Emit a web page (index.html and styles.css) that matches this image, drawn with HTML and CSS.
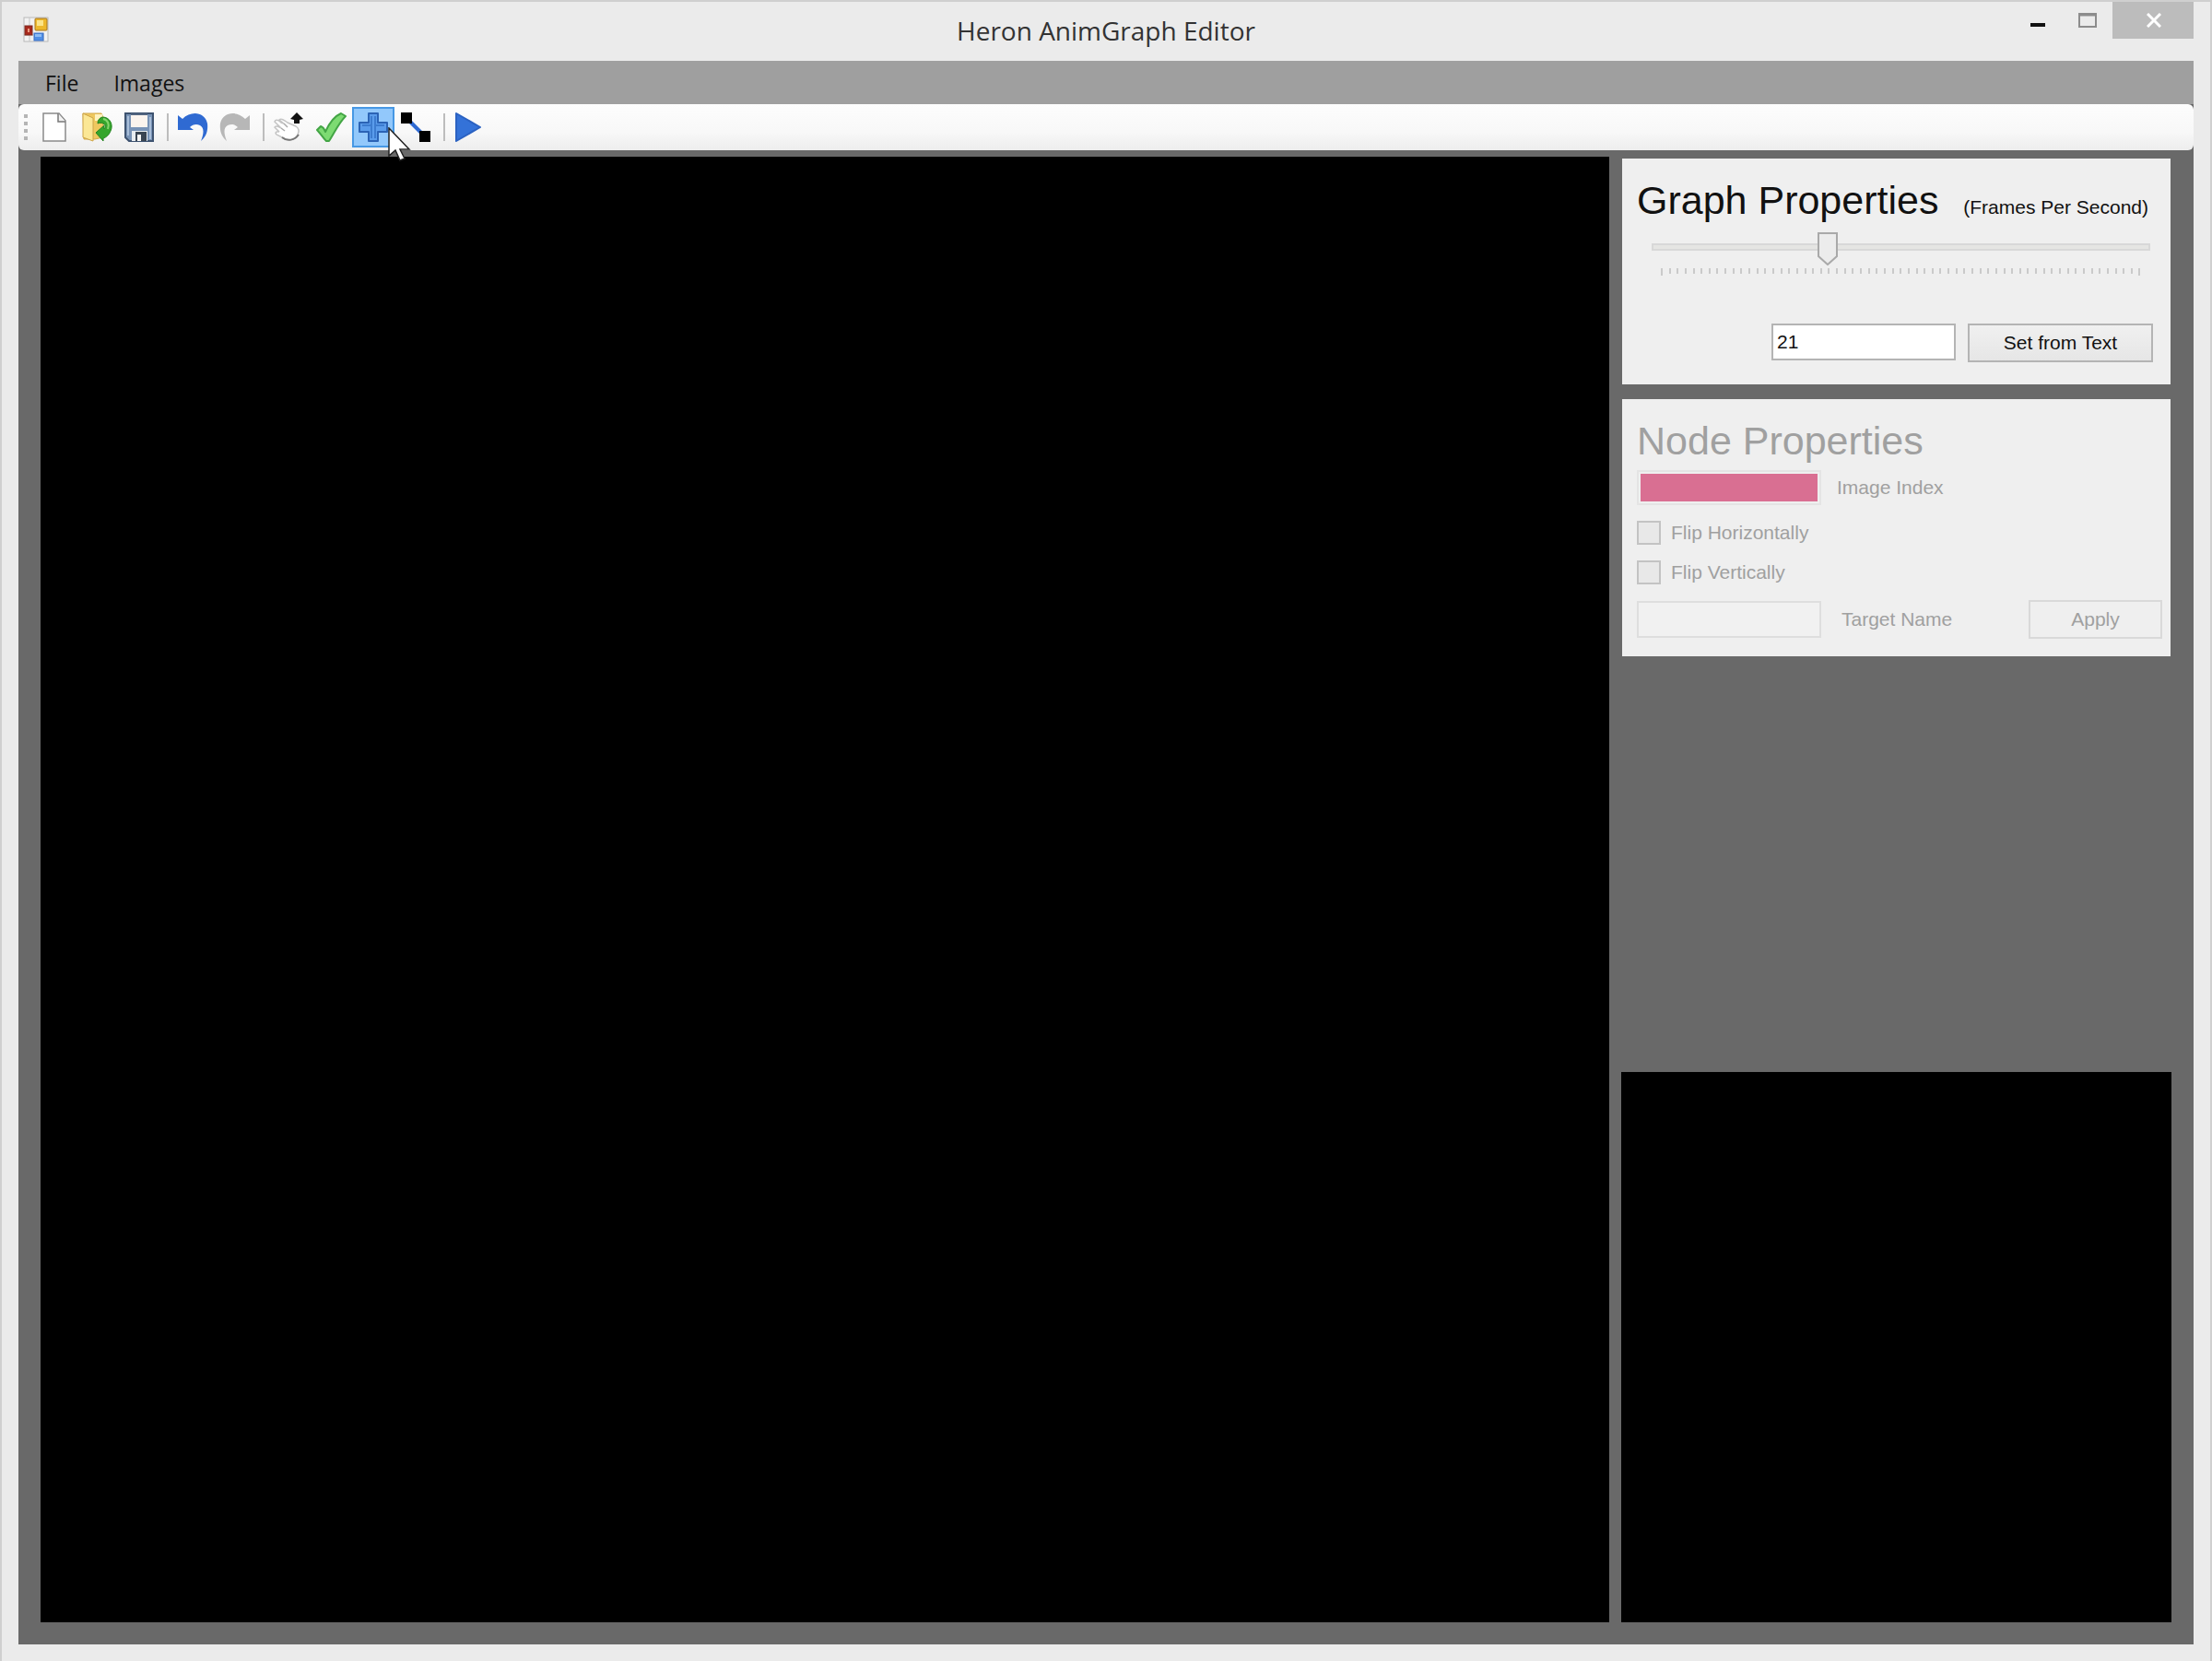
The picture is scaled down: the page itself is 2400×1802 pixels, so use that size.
FILE: index.html
```
<!DOCTYPE html>
<html lang="en">
<head>
<meta charset="UTF-8" />
<meta name="viewport" content="width=device-width, initial-scale=1" />
<title>Heron AnimGraph Editor</title>
<link rel="stylesheet" href="styles.css">
</head>
<body>

<div class="window">
  <header class="titlebar">
    <svg class="app-icon" width="28" height="28" viewBox="0 0 28 28">
      <rect x="1" y="1" width="26" height="26" fill="#f2f2f2" stroke="#b9b9b9" />
      <path d="M7 1v26M1 20h10M22 18v9" stroke="#c4c4c4" />
      <rect x="2" y="10" width="8" height="10" fill="#a8281c" stroke="#7c2a20" />
      <rect x="5" y="13" width="2" height="4" fill="#e99a80" />
      <rect x="13" y="2" width="13" height="13" rx="1" fill="#edb82c" stroke="#a8771c" />
      <rect x="15" y="4" width="7" height="6" fill="#fbe489" />
      <rect x="12" y="18" width="10" height="8" fill="#4f8ee6" stroke="#3a6fc4" />
      <rect x="13" y="19" width="7" height="3" fill="#8dbcf5" />
    </svg>
    <h1>Heron AnimGraph Editor</h1>
    <div class="window-buttons">
      <button type="button" class="minimize" aria-label="Minimize">
        <svg width="16" height="16" viewBox="0 0 16 16"><rect x="0" y="11" width="16" height="4" fill="#111" /></svg>
      </button>
      <button type="button" class="maximize" aria-label="Maximize">
        <svg width="20" height="16" viewBox="0 0 20 16">
          <rect x="1" y="1" width="18" height="14" fill="none" stroke="#8c8c8c" stroke-width="2" />
          <path d="M0 2h20" stroke="#8c8c8c" stroke-width="3" />
        </svg>
      </button>
      <button type="button" class="close" aria-label="Close">
        <svg width="16" height="16" viewBox="0 0 16 16"><path d="M1 1l14 14M15 1L1 15" stroke="#fff" stroke-width="3" /></svg>
      </button>
    </div>
  </header>

  <main class="client">
    <nav class="menubar">
      <button type="button">File</button>
      <button type="button">Images</button>
    </nav>

    <div class="toolbar-tray">
      <div class="toolbar">
        <span class="grip"></span>
        <button type="button" aria-label="New">
          <svg width="34" height="34" viewBox="0 0 34 34">
            <path d="M5 2h17l7 8v22H5z" fill="#fff" stroke="#8a8a8a" stroke-width="1.5" />
            <path d="M21 2v9h8" fill="#f1f1f1" stroke="#777" stroke-width="1.5" />
          </svg>
        </button>
        <button type="button" aria-label="Open">
          <svg width="34" height="34" viewBox="0 0 34 34">
            <path d="M2 2h20l2 4v22l-9 2H3z" fill="#efc85f" stroke="#d3aa4c" />
            <path d="M15 3h8l1 7h-9z" fill="#fff2bf" />
            <path d="M2 2l11 5v25L2 28z" fill="#fbe795" stroke="#cda448" />
            <path d="M23 6c9 0 12 9 9 15-2 5-5 7-8 8v3l-8-9 9-8v4c2-2 2-4-1-6-2-1-4-1-6 0 0-4 2-6 5-7z" fill="#35a52c" stroke="#23831f" />
            <path d="M24 8c5 1 7 6 5 11" fill="none" stroke="#86d66c" stroke-width="2" />
          </svg>
        </button>
        <button type="button" aria-label="Save">
          <svg width="34" height="34" viewBox="0 0 34 34">
            <path d="M2 2h30v30H6l-4-4z" fill="#7893b6" stroke="#3e5370" stroke-width="2" />
            <path d="M5 5v21M29 6v24" stroke="#a9bed8" stroke-width="2" />
            <rect x="8" y="2" width="18" height="15" fill="#fbf4ee" />
            <path d="M8 3h18" stroke="#52657f" stroke-width="2" />
            <rect x="9" y="21" width="17" height="11" fill="#e9edf1" />
            <rect x="13" y="22" width="12" height="10" fill="#3a4552" />
            <rect x="15" y="25" width="4" height="7" fill="#f7f7f7" />
          </svg>
        </button>
        <span class="separator"></span>
        <button type="button" aria-label="Undo">
          <svg width="34" height="34" viewBox="0 0 34 34">
            <path d="M1 4l5 4C15-1 30 0 33 13c1 9-2 15-7 19 3-8 4-14-1-17-4-2-8-1-11 2l4 3H1z" fill="#2f6ad2" />
          </svg>
        </button>
        <button type="button" aria-label="Redo">
          <svg width="34" height="34" viewBox="0 0 34 34">
            <path d="M33 4l-5 4C19-1 4 0 1 13c-1 9 2 15 7 19-3-8-4-14 1-17 4-2 8-1 11 2l-4 3h17z" fill="#b7b7b7" />
          </svg>
        </button>
        <span class="separator"></span>
        <button type="button" aria-label="Move">
          <svg width="34" height="34" viewBox="0 0 34 34">
            <path d="M9 18L2 11c1-3 4-2 7 1l3 1-5-4c2-2 5 0 9 3l9 4c3 2 4 5 2 9-2 5-8 7-13 5L4 25c-2-2 0-4 3-3l-5-5c1-2 4-1 7 1z" fill="#fff" stroke="#c4c4c4" stroke-width="1.5" />
            <path d="M10 28c6 5 14 3 18-3" fill="none" stroke="#777" stroke-width="2" />
            <path d="M9 18l4 3M12 13l4 4" fill="none" stroke="#aaa" stroke-width="1.5" />
            <path d="M26 1l7 7-4 1v4h-6V9l-4-1z" fill="#111" />
          </svg>
        </button>
        <button type="button" aria-label="Select">
          <svg width="34" height="34" viewBox="0 0 34 34">
            <path d="M2 20l4-4c3 1 4 3 5 6C15 13 21 5 28 2l5 3c-8 8-12 18-18 27h-3C8 28 5 23 2 20z" fill="#7ddb72" stroke="#43a545" stroke-width="2" stroke-linejoin="round" />
          </svg>
        </button>
        <button type="button" class="active" aria-label="Add node" aria-pressed="true">
          <svg width="34" height="34" viewBox="0 0 34 34">
            <path d="M12 2h10v10h10v10H22v10H12V22H2V12h10z" fill="#5a9ceb" stroke="#2b63b5" stroke-width="2" stroke-linejoin="round" />
            <path d="M15 5v24M19 5v24M5 15h10M19 15h10" stroke="#3c7ccf" stroke-width="2" />
          </svg>
          <svg class="cursor" width="26" height="38" viewBox="0 0 26 38">
            <path d="M1 1v30l7-6 5 11 5-2-5-10h10z" fill="#fff" stroke="#222" stroke-width="1.5" />
          </svg>
        </button>
        <button type="button" aria-label="Add link">
          <svg width="34" height="34" viewBox="0 0 34 34">
            <path d="M7 7l20 20" stroke="#2f6ad2" stroke-width="4" />
            <rect x="1" y="1" width="12" height="12" fill="#000" />
            <rect x="21" y="21" width="12" height="12" fill="#000" />
          </svg>
        </button>
        <span class="separator"></span>
        <button type="button" aria-label="Play">
          <svg width="34" height="34" viewBox="0 0 34 34">
            <path d="M3 2l26 15L3 32z" fill="#3472d8" stroke="#2b62c2" stroke-width="2" stroke-linejoin="round" />
          </svg>
        </button>
      </div>
    </div>

    <div class="workspace">
      <section class="graph-view" aria-label="Graph"></section>

      <aside class="sidebar">
        <form class="panel graph-panel" id="formGraph">
          <div class="panel-header">
            <h2>Graph Properties</h2>
            <label for="fps">(Frames Per Second)</label>
          </div>
          <input type="range" id="fps" min="0" max="60" value="21" />
          <div class="ticks" id="ticks"></div>
          <div class="fps-row">
            <input type="text" class="textbox" id="fpsText" value="21" aria-label="Frames per second" />
            <button type="submit" class="set-button">Set from Text</button>
          </div>
        </form>

        <fieldset class="panel node-panel" disabled>
          <h2>Node Properties</h2>
          <div class="field">
            <input type="text" class="textbox image-index" id="imageIndex" />
            <label for="imageIndex">Image Index</label>
          </div>
          <label class="check"><input type="checkbox" /> Flip Horizontally</label>
          <label class="check"><input type="checkbox" /> Flip Vertically</label>
          <div class="field target">
            <input type="text" class="textbox" id="targetName" />
            <label for="targetName">Target Name</label>
            <button type="button" class="apply-button">Apply</button>
          </div>
        </fieldset>

        <section class="preview" aria-label="Preview"></section>
      </aside>
    </div>
  </main>
</div>

<script>
  const fps = document.getElementById('fps');
  const fpsText = document.getElementById('fpsText');
  const ticks = document.getElementById('ticks');

  // one tick per slider step
  for (let i = 0; i <= Number(fps.max); i++) {
    ticks.appendChild(document.createElement('span'));
  }

  fps.addEventListener('input', function() {
    fpsText.value = fps.value;
  });

  document.getElementById('formGraph').addEventListener('submit', function(event) {
    event.preventDefault();
    fps.value = fpsText.value;
  });
</script>

</body>
</html>
```

FILE: styles.css
```
* {
  box-sizing: border-box;
}
body {
  margin: 0;
  font-family: "Liberation Sans", Arial, sans-serif;
  font-size: 21px;
  line-height: 24px;
  color: #111;
}
button, input {
  font: inherit;
  color: inherit;
}
button {
  padding: 0;
  border: none;
  background: none;
}
svg {
  display: block;
}
h1, h2 {
  margin: 0;
  font-weight: normal;
}

/* window frame */
.window {
  display: flex;
  flex-direction: column;
  min-height: 100vh;
  padding: 0 18px 18px;
  background: #ebebeb;
  border: 2px solid #cfcfcf;
  border-bottom: none;
}
.titlebar {
  display: grid;
  grid-template-columns: 1fr auto 1fr;
  align-items: start;
  height: 64px;
}
.app-icon {
  margin: 16px 5px;
}
h1 {
  font-family: "Open Sans", "Noto Sans", sans-serif;
  font-size: 28px;
  line-height: 62px;
  color: #333;
}
.window-buttons {
  display: flex;
  justify-content: flex-end;
}
.window-buttons button {
  display: flex;
  align-items: center;
  justify-content: center;
  width: 54px;
  height: 40px;
}
.window-buttons .close {
  width: 88px;
  padding-left: 2px;
  background: #bcbcbc;
}

/* menu and tools */
.client {
  flex: 1;
  display: flex;
  flex-direction: column;
  background: #696969;
}
.menubar {
  display: flex;
  gap: 38px;
  height: 47px;
  padding: 0 29px;
  background: #9f9f9f;
  font-family: "Open Sans", "Noto Sans", sans-serif;
  font-size: 23px;
}
.toolbar {
  display: flex;
  align-items: center;
  height: 50px;
  padding: 0 4px;
  border-radius: 6px;
  background: linear-gradient(#fdfdfd, #f8f8f8 60%, #ededed);
}
.toolbar button {
  position: relative;
  display: flex;
  align-items: center;
  justify-content: center;
  width: 46px;
  height: 44px;
}
.toolbar .active {
  background: #92c8fb;
  border: 2px solid #4798e4;
}
.cursor {
  position: absolute;
  left: 37px;
  top: 20px;
  z-index: 1;
}
.grip {
  width: 4px;
  height: 28px;
  margin: 0 6px 0 2px;
  background: repeating-linear-gradient(#b5b5b5 0 4px, transparent 4px 8px);
}
.separator {
  width: 2px;
  height: 30px;
  margin: 0 3px 0 7px;
  background: #bdbdbd;
}

/* work area */
.workspace {
  flex: 1;
  display: grid;
  grid-template-columns: 1fr 597px;
  gap: 13px;
  padding: 7px 24px 24px;
}
.graph-view, .preview {
  background: #000;
}
.sidebar {
  display: flex;
  flex-direction: column;
  gap: 16px;
  padding-top: 2px;
}
.preview {
  margin-top: auto;
  aspect-ratio: 1;
}
.panel {
  margin: 0 1px;
  padding: 21px 9px 19px 16px;
  border: none;
  background: #efefef;
}
h2 {
  font-size: 43px;
  line-height: 48px;
}
.panel-header {
  display: flex;
  justify-content: space-between;
  align-items: baseline;
  padding-right: 15px;
}
.textbox {
  width: 200px;
  height: 40px;
  padding: 0 4px;
  border: 2px solid #b4b4b4;
  background: #fff;
}

/* frame rate slider */
.graph-panel {
  padding-bottom: 24px;
}
#fps {
  -webkit-appearance: none;
  appearance: none;
  display: block;
  width: calc(100% - 29px);
  height: 36px;
  margin: 9px 13px 0 16px;
  background: none;
}
#fps::-webkit-slider-runnable-track {
  height: 8px;
  border: 2px solid #d8d8d8;
  background: #e5e5e3;
}
#fps::-webkit-slider-thumb {
  -webkit-appearance: none;
  width: 22px;
  height: 36px;
  margin: -14px -2px 0;
  background: url("data:image/svg+xml,%3Csvg xmlns='http://www.w3.org/2000/svg' width='22' height='36'%3E%3Cpath d='M1 1h20v25L11 35 1 26z' fill='%23ececec' stroke='%23a9a9a9' stroke-width='2'/%3E%3C/svg%3E") no-repeat;
}
.ticks {
  display: flex;
  justify-content: space-between;
  height: 8px;
  margin: 5px 23px 0 26px;
}
.ticks span {
  width: 2px;
  height: 6px;
  background: #cacaca;
}
.ticks span:first-child, .ticks span:last-child {
  height: 8px;
}
.fps-row {
  display: flex;
  justify-content: flex-end;
  align-items: flex-start;
  gap: 13px;
  margin-top: 52px;
  padding-right: 10px;
}
.set-button, .apply-button {
  height: 42px;
  border: 2px solid #b4b4b4;
  background: linear-gradient(#f0f0f0, #e6e6e6);
}
.set-button {
  width: 201px;
}

/* node settings, greyed out until a node is picked */
.node-panel {
  display: flex;
  flex-direction: column;
  gap: 17px;
  color: #a0a0a0;
}
.node-panel h2 {
  margin-bottom: -9px;
}
.field, .check {
  display: flex;
  align-items: center;
  gap: 17px;
}
.node-panel .textbox {
  background: #f1f1f1;
  border-color: #dedede;
}
.node-panel .image-index {
  height: 38px;
  border: 2px solid #e4e4e4;
  padding: 2px;
  background: #d96f92 content-box;
}
.check {
  gap: 11px;
}
.check input {
  -webkit-appearance: none;
  appearance: none;
  width: 26px;
  height: 26px;
  margin: 0;
  border: 2px solid #c3c3c3;
  background: #e8e8e8;
}
.target {
  gap: 22px;
}
.apply-button {
  width: 145px;
  margin-left: auto;
  border-color: #d9d9d9;
  background: #efefef;
}
```
